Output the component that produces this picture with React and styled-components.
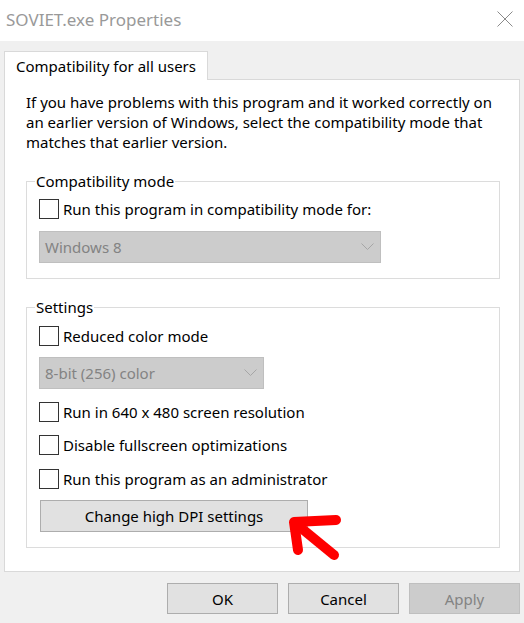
import React from 'react';
import styled, { createGlobalStyle } from 'styled-components';

const GlobalStyle = createGlobalStyle`
  html, body {
    margin: 0;
    padding: 0;
    background: #f0f0f0;
  }
  body {
    font-family: "Noto Sans", "Open Sans", sans-serif;
    font-size: 15px;
    color: #000;
  }
`;

const Window = styled.div`
  position: relative;
  width: 524px;
  height: 623px;
  background: #f0f0f0;
  display: flex;
  flex-direction: column;
  overflow: hidden;
`;

const TitleBar = styled.div`
  height: 41px;
  background: #fff;
  display: flex;
  align-items: center;
  justify-content: space-between;
  padding: 0 11px 0 6px;
  box-sizing: border-box;
`;

const Title = styled.div`
  font-size: 17px;
  color: #999;
  margin-top: -2px;
`;

const CloseIcon = styled.svg`
  width: 16px;
  height: 16px;
  margin-top: -4px;
`;

const Body = styled.div`
  padding: 10px 4px 0 4px;
  display: flex;
  flex-direction: column;
`;

const TabStrip = styled.div`
  display: flex;
  height: 29px;
  margin-bottom: -1px;
  position: relative;
  z-index: 1;
`;

const Tab = styled.div`
  background: #fff;
  border: 1px solid #d9d9d9;
  border-bottom: none;
  padding: 0 11px;
  width: 204px;
  box-sizing: border-box;
  display: flex;
  align-items: center;
  line-height: 20px;
`;

const Panel = styled.div`
  background: #fff;
  border: 1px solid #d9d9d9;
  height: 493px;
  box-sizing: border-box;
  padding: 0 19px 0 21px;
  display: flex;
  flex-direction: column;
`;

const Intro = styled.p`
  margin: 12px 0 0 0;
  line-height: 20px;
`;

const GroupBox = styled.fieldset`
  margin: ${p => p.$top}px 0 0 0;
  padding: ${p => p.$padTop}px 12px 15px 12px;
  border: 1px solid #dcdcdc;
  display: flex;
  flex-direction: column;
  align-items: flex-start;
  min-width: 0;
`;

const Legend = styled.legend`
  padding: 0 1px;
  margin-left: -4px;
  line-height: 20px;
`;

const CheckRow = styled.label`
  display: flex;
  align-items: center;
  height: 20px;
  margin-top: ${p => p.$top || 0}px;
  gap: 4px;
  line-height: 20px;
  white-space: nowrap;
`;

const Box = styled.span`
  width: 20px;
  height: 20px;
  box-sizing: border-box;
  border: 1px solid #333;
  background: #fff;
  flex: none;
`;

const Select = styled.div`
  width: ${p => p.$width}px;
  height: 32px;
  margin-top: ${p => p.$top}px;
  box-sizing: border-box;
  background: #cccccc;
  border: 1px solid #bfbfbf;
  color: #838383;
  display: flex;
  align-items: center;
  justify-content: space-between;
  padding: 0 6px 0 5px;
`;

const Chevron = styled.svg`
  width: 13px;
  height: 8px;
`;

const PushButton = styled.button`
  font: inherit;
  font-size: 15px;
  width: ${p => p.$width}px;
  height: ${p => p.$height || 32}px;
  margin-top: ${p => p.$top || 0}px;
  margin-left: ${p => p.$left || 0}px;
  box-sizing: border-box;
  background: ${p => (p.disabled ? '#cccccc' : '#e1e1e1')};
  border: 1px solid ${p => (p.disabled ? '#bfbfbf' : '#adadad')};
  color: ${p => (p.disabled ? '#838383' : '#000')};
  padding: 0;
  line-height: 20px;
`;

const Footer = styled.div`
  display: flex;
  justify-content: flex-end;
  gap: 10px;
  padding: 11px 0 0 0;
`;

const Arrow = styled.svg`
  position: absolute;
  left: 284px;
  top: 510px;
  width: 64px;
  height: 56px;
  overflow: visible;
`;

function Check({ top, children }) {
  return (
    <CheckRow $top={top}>
      <Box />
      <span>{children}</span>
    </CheckRow>
  );
}

function Dropdown({ width, top, children }) {
  return (
    <Select $width={width} $top={top}>
      <span>{children}</span>
      <Chevron viewBox="0 0 13 8">
        <path d="M0.5 0.5 L6.5 6.5 L12.5 0.5" fill="none" stroke="#a6a6a6" strokeWidth="1" />
      </Chevron>
    </Select>
  );
}

export default function App() {
  return (
    <>
      <GlobalStyle />
      <Window>
        <TitleBar>
          <Title>SOVIET.exe Properties</Title>
          <CloseIcon viewBox="0 0 16 16">
            <path d="M0.5 0.5 L15.5 15.5 M15.5 0.5 L0.5 15.5" stroke="#8a8a8a" strokeWidth="1" fill="none" />
          </CloseIcon>
        </TitleBar>
        <Body>
          <TabStrip>
            <Tab>Compatibility for all users</Tab>
          </TabStrip>
          <Panel>
            <Intro>
              If you have problems with this program and it worked correctly on
              an earlier version of Windows, select the compatibility mode that
              matches that earlier version.
            </Intro>
            <GroupBox $top={19} $padTop={8}>
              <Legend>Compatibility mode</Legend>
              <Check>Run this program in compatibility mode for:</Check>
              <Dropdown width={342} top={12}>Windows 8</Dropdown>
            </GroupBox>
            <GroupBox $top={18} $padTop={9}>
              <Legend>Settings</Legend>
              <Check>Reduced color mode</Check>
              <Dropdown width={225} top={11}>8-bit (256) color</Dropdown>
              <Check top={13}>Run in 640 x 480 screen resolution</Check>
              <Check top={13}>Disable fullscreen optimizations</Check>
              <Check top={14}>Run this program as an administrator</Check>
              <PushButton $width={268} $top={11} $left={1}>Change high DPI settings</PushButton>
            </GroupBox>
          </Panel>
          <Footer>
            <PushButton $width={111} $height={31}>OK</PushButton>
            <PushButton $width={111} $height={31}>Cancel</PushButton>
            <PushButton $width={111} $height={31} disabled>Apply</PushButton>
          </Footer>
        </Body>
        <Arrow viewBox="0 0 64 56">
          <g stroke="#ff0000" strokeWidth="10" strokeLinecap="round" strokeLinejoin="round" fill="none">
            <path d="M52 10 L10 12 L14 40" />
            <path d="M11 13 L50 45" />
          </g>
        </Arrow>
      </Window>
    </>
  );
}
